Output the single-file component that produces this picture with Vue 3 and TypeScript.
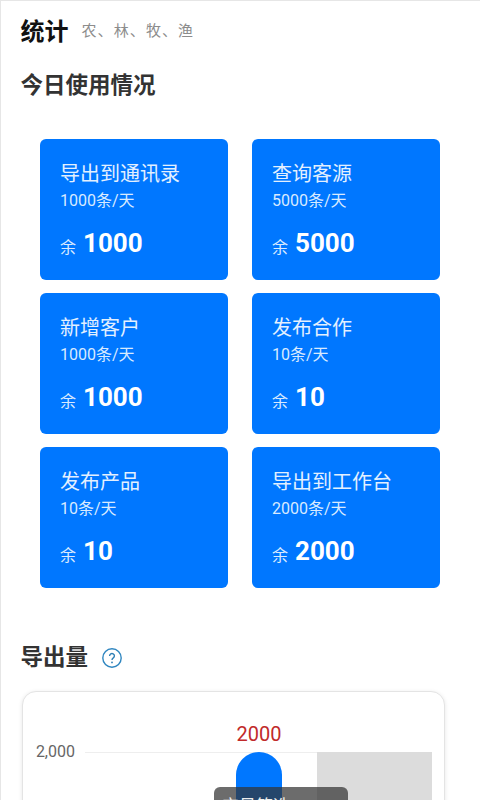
<script setup lang="ts">
const cards = [
  { title: '导出到通讯录', limit: '1000条/天', left: '1000' },
  { title: '查询客源', limit: '5000条/天', left: '5000' },
  { title: '新增客户', limit: '1000条/天', left: '1000' },
  { title: '发布合作', limit: '10条/天', left: '10' },
  { title: '发布产品', limit: '10条/天', left: '10' },
  { title: '导出到工作台', limit: '2000条/天', left: '2000' },
]
</script>

<template>
  <div class="page">
    <header class="head">
      <h1 class="brand">统计</h1>
      <span class="tag">农、林、牧、渔</span>
    </header>
    <h2 class="section first">今日使用情况</h2>
    <div class="grid">
      <div v-for="c in cards" :key="c.title" class="card">
        <div class="title">{{ c.title }}</div>
        <div class="limit">{{ c.limit }}</div>
        <div class="rest"><span class="yu">余</span><b class="num">{{ c.left }}</b></div>
      </div>
    </div>
    <div class="export-head">
      <h2 class="section">导出量</h2>
      <svg class="help" width="20" height="20" viewBox="0 0 20 20" fill="none">
        <circle cx="10" cy="10" r="9.2" stroke="#2f86c0" stroke-width="1.4" />
        <path d="M7.6 7.9a2.4 2.4 0 1 1 3.7 2c-.9.6-1.3 1-1.3 2" stroke="#2f7fb5" stroke-width="1.4" fill="none" />
        <circle cx="10" cy="14.4" r=".9" fill="#2f7fb5" />
      </svg>
    </div>
    <div class="chart">
      <div class="value">2000</div>
      <div class="plot-row">
        <span class="axis">2,000</span>
        <div class="plot">
          <div class="shade"></div>
          <div class="bar"></div>
        </div>
      </div>
      <div class="tooltip">宝贝筛选</div>
    </div>
  </div>
</template>

<style>
html, body { margin: 0; background: #fff; overflow: hidden; }
</style>

<style scoped>
.page {
  width: 480px;
  height: 800px;
  box-sizing: border-box;
  overflow: hidden;
  border-top: 1px solid #e6e6e6;
  border-left: 1px solid #e6e6e6;
  font-family: Roboto, "Noto Sans CJK SC", sans-serif;
  color: #333;
}
.head {
  display: flex;
  align-items: center;
  gap: 13px;
  padding: 16px 0 0 19.5px;
  height: 30px;
}
.brand { margin: 0; font-size: 24px; line-height: 30px; font-weight: 700; color: #111; }
.tag { font-size: 15px; line-height: 30px; color: #8c8c8c; letter-spacing: 1.1px; margin-top: -2px; }
.section { margin: 0; font-size: 22.5px; line-height: 30px; font-weight: 700; color: #333; }
.first { margin: 23px 0 0 19.5px; }
.grid {
  display: grid;
  grid-template-columns: 188px 188px;
  grid-auto-rows: 141px;
  column-gap: 24px;
  row-gap: 13px;
  margin: 39px 0 0 39px;
}
.card {
  background: #0077ff;
  border-radius: 6px;
  color: #fff;
  padding: 22px 20px 0;
  box-sizing: border-box;
}
.title { font-size: 20px; line-height: 26px; color: #e3f0ff; }
.limit { font-size: 16px; line-height: 22px; margin-top: 3px; color: #d8eaff; }
.rest { display: flex; align-items: baseline; margin-top: 15px; }
.yu { font-size: 16px; color: #d8eaff; margin-right: 7px; position: relative; top: 1px; }
.num { font-size: 26px; line-height: 32px; font-weight: 700; }
.export-head { display: flex; align-items: center; gap: 14px; margin: 54px 0 0 19.5px; }
.help { display: block; margin-top: 1px; }
.chart {
  position: relative;
  margin: 19px 0 0 21px;
  width: 423px;
  height: 200px;
  box-sizing: border-box;
  background: #fff;
  border: 1px solid #e4e4e4;
  border-radius: 14px;
  box-shadow: 0 1px 4px rgba(0,0,0,.1);
  padding-top: 31px;
}
.value {
  margin-left: 213px;
  width: 46px;
  text-align: center;
  font-size: 20px;
  line-height: 22px;
  color: #c12a2a;
}
.plot-row { display: flex; margin-top: 7px; }
.axis {
  width: 52px;
  text-align: right;
  font-size: 16px;
  line-height: 14px;
  color: #666;
  margin-top: -7px;
}
.plot {
  position: relative;
  margin-left: 10px;
  width: 347px;
  height: 100px;
  border-top: 1px solid #eee;
}
.shade { position: absolute; right: 0; top: -1px; width: 115px; height: 101px; background: #dcdcdc; }
.bar { position: absolute; left: 151px; top: -1px; width: 46px; height: 101px; background: #0077ff; border-radius: 23px 23px 0 0; }
.tooltip {
  position: absolute;
  left: 191px;
  top: 95px;
  width: 134px;
  height: 40px;
  box-sizing: border-box;
  padding: 5px 0 0 8px;
  background: rgba(51,51,51,.72);
  border-radius: 6px;
  color: #eee;
  font-size: 17px;
}
</style>
